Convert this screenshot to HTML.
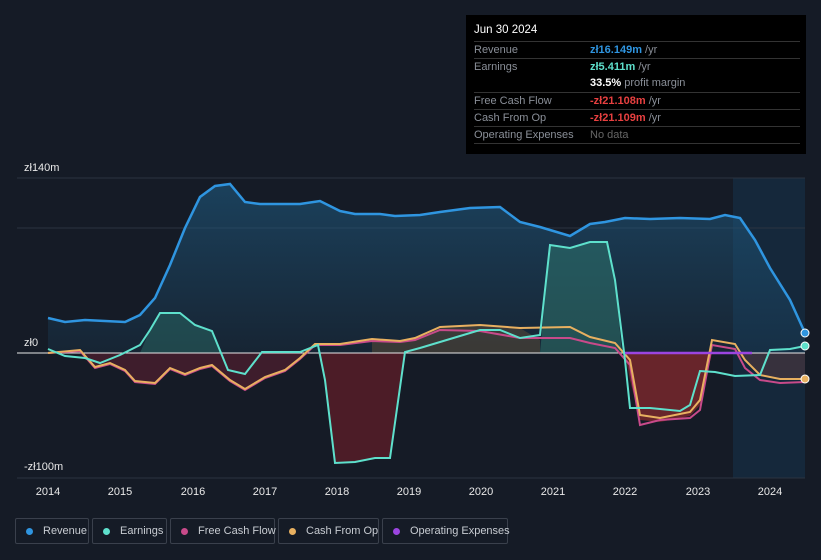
<!DOCTYPE html>
<html><head><meta charset="utf-8"><style>
body{margin:0;background:#151b26;width:821px;height:560px;overflow:hidden;font-family:"Liberation Sans",sans-serif}
.tt{position:absolute;left:466px;top:15px;width:340px;height:139px;background:#000;font-size:11px;color:#8a8f98}
.tt .d{color:#fff;font-size:11.5px;position:absolute;left:8px;top:9px}
.row{position:absolute;left:8px;width:326px;height:17px;border-top:1px solid #333;line-height:16px}
.row span.v{position:absolute;left:116px}
.leg{position:absolute;top:518px;height:26px;border:1px solid #3a404c;border-radius:2px;font-size:11px;color:#c8ccd2;line-height:24px;box-sizing:border-box;white-space:nowrap}
.leg i{position:absolute;left:10px;top:9px;width:7px;height:7px;border-radius:50%}
.leg span{position:absolute;left:27px}
</style></head><body>
<svg width="821" height="560" style="position:absolute;left:0;top:0">
<defs><linearGradient id="rg" x1="0" y1="0" x2="0" y2="1"><stop offset="0" stop-color="#1f5a80" stop-opacity=".6"/><stop offset="1" stop-color="#1f5a80" stop-opacity=".15"/></linearGradient></defs>
<rect x="733" y="178" width="72" height="300" fill="#16324a" opacity=".6"/>
<line x1="17" y1="178" x2="805" y2="178" stroke="#2c3340"/>
<line x1="17" y1="228" x2="805" y2="228" stroke="#2c3340"/>
<line x1="17" y1="478" x2="805" y2="478" stroke="#2c3340"/>
<polygon fill="url(#rg)" points="48,353 48,318 65,322 85,320 105,321 125,322 140,315 155,298 170,265 185,228 200,197 215,186 230,184 245,202 260,204 300,204 320,201 340,211 355,214 380,214 395,216 420,215 440,212 470,208 500,207 520,222 540,227 570,236 590,224 605,222 625,218 650,219 680,218 710,219 725,215 740,218 755,240 770,268 790,300 805,333 805,353"/>
<polygon fill="#8b2a2e" opacity=".7" points="625,353 630,380 640,420 660,422 690,416 700,405 712,353"/>
<polygon fill="#5a1d28" opacity=".8" points="318,353 325,380 335,463 355,462 375,458 390,458 405,353"/>
<polygon fill="#5a2030" opacity=".6" points="85,353 95,367 110,363 125,370 135,381 155,383 170,368 185,374 200,368 212,365 230,380 245,389 265,377 285,370 300,358 310,353"/>
<polygon fill="#2f7a70" opacity=".5" points="540,353 550,245 570,248 590,242 607,242 615,280 622,353"/>
<polygon fill="#2f7a70" opacity=".4" points="140,353 150,330 160,313 180,313 195,325 212,331 222,353"/>
<polygon fill="#70583a" opacity=".4" points="372,353 372,339 400,341 415,338 440,327 480,325 520,328 540,340 540,353"/>
<polygon fill="#5a3a40" opacity=".5" points="735,353 745,360 760,375 780,379 805,379 805,353"/>
<line x1="17" y1="353" x2="805" y2="353" stroke="#e8e8e8" stroke-width="1"/>
<polyline fill="none" stroke="#c84a8a" stroke-width="2" points="48,353 80,351 95,368 110,364 125,371 135,382 155,384 170,369 185,375 200,369 212,366 230,381 245,390 265,378 285,371 300,359 315,345 340,345 372,341 400,342 415,340 440,330 480,331 520,338 570,338 590,343 615,348 630,365 640,425 660,420 690,418 700,410 712,345 735,349 745,368 760,380 780,383 805,382"/>
<polyline fill="none" stroke="#e8b060" stroke-width="2" points="48,353 80,350 95,367 110,363 125,370 135,381 155,383 170,368 185,374 200,368 212,365 230,380 245,389 265,377 285,370 300,358 315,344 340,344 372,339 400,341 415,338 440,327 480,325 520,328 570,327 590,337 615,343 630,360 640,415 660,418 690,412 700,400 712,340 735,344 745,360 760,375 780,379 805,379"/>
<polyline fill="none" stroke="#5ee0cc" stroke-width="2" points="48,349 65,356 85,358 100,363 120,355 140,345 150,330 160,313 180,313 195,325 212,331 228,370 245,374 262,352 300,352 318,345 325,380 335,463 355,462 375,458 390,458 405,352 420,348 440,342 460,336 480,330 500,330 520,338 540,335 550,245 570,248 590,242 607,242 615,280 625,360 630,408 650,408 680,411 690,405 700,371 715,372 735,376 760,375 770,350 790,349 805,346"/>
<line x1="625" y1="353" x2="752" y2="353" stroke="#9b45e0" stroke-width="2.5"/>
<polyline fill="none" stroke="#2f95e0" stroke-width="2.5" points="48,318 65,322 85,320 105,321 125,322 140,315 155,298 170,265 185,228 200,197 215,186 230,184 245,202 260,204 300,204 320,201 340,211 355,214 380,214 395,216 420,215 440,212 470,208 500,207 520,222 540,227 570,236 590,224 605,222 625,218 650,219 680,218 710,219 725,215 740,218 755,240 770,268 790,300 805,333"/>
<circle cx="805" cy="333" r="4" fill="#2f95e0" stroke="#fff" stroke-width="1"/>
<circle cx="805" cy="346" r="4" fill="#5ee0cc" stroke="#fff" stroke-width="1"/>
<circle cx="805" cy="379" r="4" fill="#e8b060" stroke="#fff" stroke-width="1"/>
<g font-size="11" fill="#e8e8e8" font-family="Liberation Sans">
<text x="24" y="171">zł140m</text><text x="24" y="346">zł0</text><text x="24" y="470">-zł100m</text>
<g text-anchor="middle"><text x="48" y="495">2014</text><text x="120" y="495">2015</text><text x="193" y="495">2016</text><text x="265" y="495">2017</text><text x="337" y="495">2018</text><text x="409" y="495">2019</text><text x="481" y="495">2020</text><text x="553" y="495">2021</text><text x="625" y="495">2022</text><text x="698" y="495">2023</text><text x="770" y="495">2024</text></g>
</g>
</svg>
<div class="tt"><div class="d">Jun 30 2024</div>
<div class="row" style="top:26px">Revenue<span class="v"><b style="color:#2f95e0">zł16.149m</b> /yr</span></div>
<div class="row" style="top:43px">Earnings<span class="v"><b style="color:#5ee0cc">zł5.411m</b> /yr</span></div>
<div class="row" style="top:60px;border-top:none"><span class="v"><b style="color:#fff">33.5%</b> profit margin</span></div>
<div class="row" style="top:77px">Free Cash Flow<span class="v"><b style="color:#e84040">-zł21.108m</b> /yr</span></div>
<div class="row" style="top:94px">Cash From Op<span class="v"><b style="color:#e84040">-zł21.109m</b> /yr</span></div>
<div class="row" style="top:111px">Operating Expenses<span class="v" style="color:#666">No data</span></div>
<div class="row" style="top:128px;height:0"></div>
</div>
<div class="leg" style="left:15px;width:74px"><i style="background:#2f95e0"></i><span>Revenue</span></div>
<div class="leg" style="left:92px;width:75px"><i style="background:#5ee0cc"></i><span>Earnings</span></div>
<div class="leg" style="left:170px;width:105px"><i style="background:#c84a8a"></i><span>Free Cash Flow</span></div>
<div class="leg" style="left:278px;width:101px"><i style="background:#e8b060"></i><span>Cash From Op</span></div>
<div class="leg" style="left:382px;width:126px"><i style="background:#9b45e0"></i><span>Operating Expenses</span></div>
</body></html>
